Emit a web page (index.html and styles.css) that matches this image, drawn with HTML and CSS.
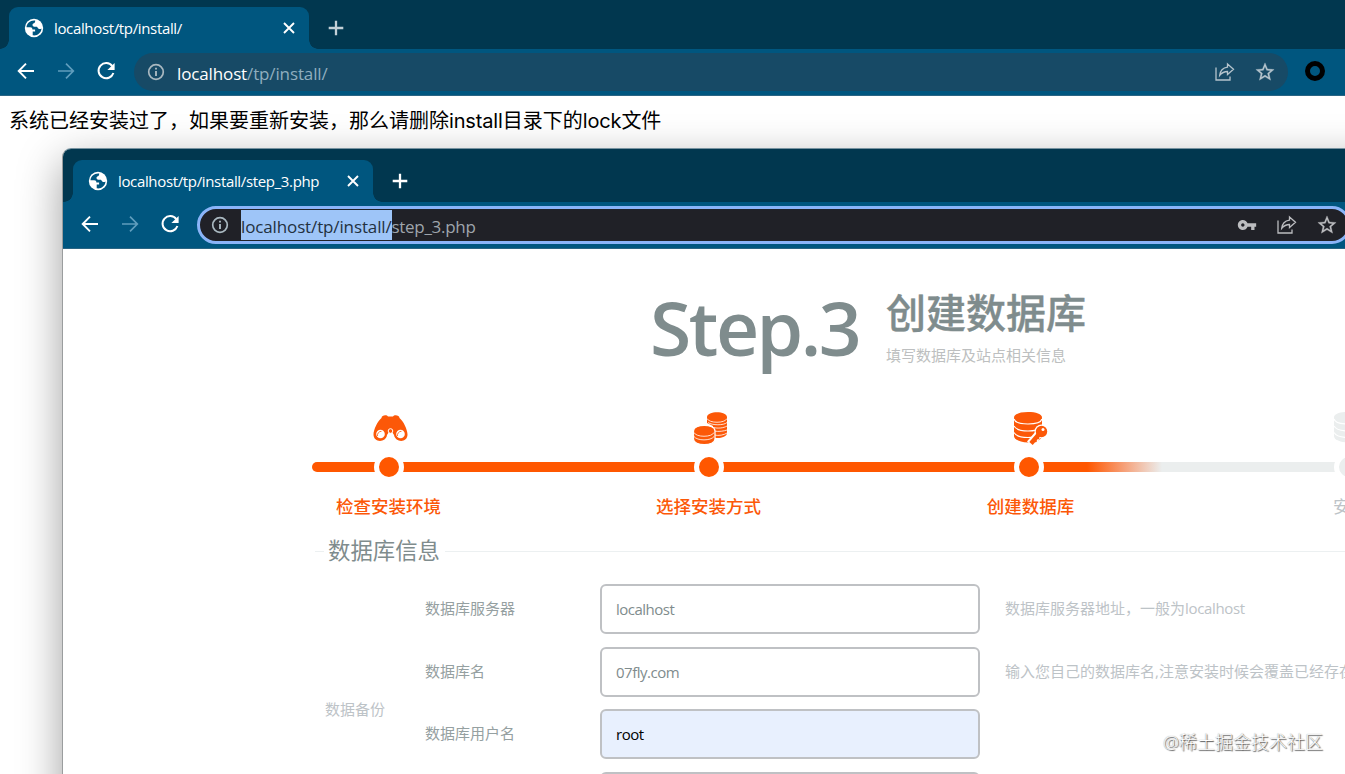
FILE: index.html
```html
<!DOCTYPE html>
<html lang="zh-CN">
<head>
    <meta charset="UTF-8">
    <meta name="viewport" content="width=device-width, initial-scale=1.0">
    <title>localhost/tp/install/</title>
    <link rel="stylesheet" href="styles.css">
</head>
<body>
    <svg class="defs" width="0" height="0">
        <symbol id="globe" viewBox="0 0 20 20">
            <circle cx="10" cy="10" r="9.2" fill="#fff"/>
            <path d="M11.2 2.5C6.500 1.900 2.600 5.300 2.500 9.300H6.200c1.500 0 2.200.9 2.200 2.200h2.700v2.100H8.700v3.700c4.800.8 8.700-2.900 8.800-6.900-.9.600-2 .8-2.900.3-.9-.5-1-1.600-1.800-1.900-1-.4-2.200.2-3.300-.4-1.400-.8-1.300-2.400-.1-3 .9-.5 1.700-.1 1.800-2.900z" fill="#00567f"/>
        </symbol>
        <symbol id="close" viewBox="0 0 12 12">
            <path d="M1 1l10 10M11 1L1 11" stroke="currentColor" stroke-width="1.9" fill="none"/>
        </symbol>
        <symbol id="plus" viewBox="0 0 16 16">
            <path d="M8 .7v14.600M.7 8h14.600" stroke="currentColor" stroke-width="2.300" fill="none"/>
        </symbol>
        <symbol id="back" viewBox="0 0 24 24">
            <path d="M20 12H5.200M12 4.700L4.700 12l7.300 7.300" stroke="currentColor" stroke-width="1.900" fill="none"/>
        </symbol>
        <symbol id="forward" viewBox="0 0 24 24">
            <path d="M4 12h14.800M12 4.700l7.300 7.300-7.300 7.300" stroke="currentColor" stroke-width="1.700" fill="none"/>
        </symbol>
        <symbol id="reload" viewBox="0 0 24 24">
            <path d="M18.300 7.100A7.600 7.600 0 1 0 19.400 14" stroke="currentColor" stroke-width="2" fill="none"/>
            <path d="M20.600 3.900v7.200h-7.200z" fill="currentColor"/>
        </symbol>
        <symbol id="info" viewBox="0 0 20 20">
            <circle cx="10" cy="10" r="7.300" stroke="currentColor" stroke-width="1.700" fill="none"/>
            <path d="M10 9v5M10 5.800v1.800" stroke="currentColor" stroke-width="1.900"/>
        </symbol>
        <symbol id="share" viewBox="0 0 22 20">
            <path d="M2 5.500V18h14v-3.500" stroke="currentColor" stroke-width="1.300" fill="none"/>
            <path d="M13.500 2l6 5.300-6 5.200v-3c-3.500 0-5.500 1-7.800 3.900.4-4.300 3-7.600 7.800-8.300z" stroke="currentColor" stroke-width="1.300" fill="none"/>
        </symbol>
        <symbol id="star" viewBox="0 0 24 24">
            <path fill="currentColor" stroke="currentColor" stroke-width=".3" d="M22 9.240l-7.190-.62L12 2 9.190 8.630 2 9.240l5.460 4.730L5.820 21 12 17.270 18.180 21l-1.630-7.030L22 9.240zM12 15.400l-3.760 2.270 1-4.280-3.320-2.880 4.380-.38L12 6.100l1.710 4.040 4.380.38-3.320 2.880 1 4.280L12 15.400z"/>
        </symbol>
        <symbol id="key" viewBox="0 0 24 24">
            <path fill="currentColor" d="M12.650 10C11.830 7.670 9.610 6 7 6c-3.310 0-6 2.690-6 6s2.690 6 6 6c2.610 0 4.830-1.670 5.650-4H17v4h4v-4h2v-4H12.650zM7 14c-1.100 0-2-.9-2-2s.9-2 2-2 2 .9 2 2-.9 2-2 2z"/>
        </symbol>
        <symbol id="database" viewBox="0 0 35 34">
            <path fill="currentColor" d="M1 6.500C1 3 7 1 15 1s14 2 14 5.500V25c0 3.500-6 6.500-14 6.500S1 28.500 1 25z"/>
            <path d="M1 8c1 3.500 7 5 14 5s13-1.500 14-5M1 15c2 3.500 7 5 14 5 6 0 11-1 14-4M1 21.500c2 3.500 7 5 14 5 4 0 7-.5 9-1.500" fill="none" stroke="#fff" stroke-width="1.100"/>
        </symbol>
    </svg>

    <div class="browser">
        <div class="tab-strip">
            <div class="tab">
                <svg class="globe"><use href="#globe"/></svg>
                <span class="tab-title">localhost/tp/install/</span>
                <svg class="close"><use href="#close"/></svg>
            </div>
            <svg class="plus"><use href="#plus"/></svg>
        </div>
        <div class="toolbar">
            <svg class="nav"><use href="#back"/></svg>
            <svg class="nav dim"><use href="#forward"/></svg>
            <svg class="nav"><use href="#reload"/></svg>
            <div class="omnibox">
                <svg class="info"><use href="#info"/></svg>
                <span class="url"><b>localhost</b>/tp/install/</span>
                <svg class="share"><use href="#share"/></svg>
                <svg class="star"><use href="#star"/></svg>
            </div>
            <div class="avatar"></div>
        </div>
        <p class="message">系统已经安装过了，如果要重新安装，那么请删除<span>install</span>目录下的<span>lock</span>文件</p>
    </div>

    <div class="browser front">
        <div class="tab-strip">
            <div class="tab">
                <svg class="globe"><use href="#globe"/></svg>
                <span class="tab-title">localhost/tp/install/step_3.php</span>
                <svg class="close"><use href="#close"/></svg>
            </div>
            <svg class="plus"><use href="#plus"/></svg>
        </div>
        <div class="toolbar">
            <svg class="nav"><use href="#back"/></svg>
            <svg class="nav dim"><use href="#forward"/></svg>
            <svg class="nav"><use href="#reload"/></svg>
            <div class="omnibox focused">
                <svg class="info"><use href="#info"/></svg>
                <span class="url"><mark>localhost/tp/install/</mark>step_3.php</span>
                <svg class="key"><use href="#key"/></svg>
                <svg class="share"><use href="#share"/></svg>
                <svg class="star"><use href="#star"/></svg>
            </div>
        </div>

        <div class="page">
            <div class="heading">
                <div class="step-no">Step.3</div>
                <div>
                    <h1>创建数据库</h1>
                    <p>填写数据库及站点相关信息</p>
                </div>
            </div>

            <div class="steps">
                <div class="step">
                    <svg class="step-icon" viewBox="0 0 35 34">
                        <path fill="currentColor" d="M8.500 7c0-3 5.500-3.500 6.500-1.500h5c1-2 6.500-1.500 6.500 1.500 4 3 8 12 8 16.500 0 8.500-12 8.500-13.500 0.500l-1.500-2.500h-4L14 24c-1 8-13.500 8-13.500-.5C.5 19 4.500 10 8.500 7z"/>
                        <circle cx="7.500" cy="23" r="4.300" fill="#fff"/>
                        <circle cx="27.500" cy="23" r="4.300" fill="#fff"/>
                        <path d="M4.500 25a4 4 0 0 1 4-4.700M24.500 25a4 4 0 0 1 4-4.700" fill="none" stroke="currentColor" stroke-width=".8"/>
                        <circle cx="17.500" cy="20" r="2.300" fill="currentColor" stroke="#fff"/>
                    </svg>
                    <i class="dot"></i>
                    <span>检查安装环境</span>
                </div>
                <div class="step">
                    <svg class="step-icon" viewBox="0 0 35 34">
                        <path fill="currentColor" d="M14 6c0-6.500 20-6.500 20 0v16c0 5-11 6-14 4V15l-6-3z"/>
                        <path d="M14 7.500c2 5 18 5 20 0M15 11.500c4 3 16 3 19 0M19 16c5 2 12 1 15-1M21 20c5 1 10 0 13-1M21 24c5 1 10 0 13-2" fill="none" stroke="#fff" stroke-width=".8"/>
                        <path fill="currentColor" stroke="#fff" stroke-width="1.200" d="M.5 20c0-7.500 21.500-7.500 21.500 0v8c0 7.500-21.500 7.500-21.500 0z"/>
                        <path d="M1 21.500c2 5 18 5 20 0M1 25.500c3 4.500 17 4.500 20 0" fill="none" stroke="#fff" stroke-width=".8"/>
                    </svg>
                    <i class="dot"></i>
                    <span>选择安装方式</span>
                </div>
                <div class="step current">
                    <svg class="step-icon" viewBox="0 0 35 34">
                        <use href="#database"/>
                        <path d="M26.500 22L17 33" stroke="#fff" stroke-width="8"/>
                        <circle cx="28.500" cy="20.500" r="7" fill="#fff"/>
                        <path d="M27 22l-9 10.500" stroke="currentColor" stroke-width="4.500"/>
                        <path d="M21.500 29l2 1.800M24 26l2 1.800" stroke="currentColor" stroke-width="2"/>
                        <circle cx="28.500" cy="20.500" r="5.700" fill="currentColor"/>
                        <circle cx="30" cy="18.500" r="1.500" fill="#fff"/>
                    </svg>
                    <i class="dot"></i>
                    <span>创建数据库</span>
                </div>
                <div class="step todo">
                    <svg class="step-icon"><use href="#database"/></svg>
                    <i class="dot"></i>
                    <span>安装</span>
                </div>
            </div>

            <div class="section-title">数据库信息</div>
            <div class="form">
                <div class="side">数据备份</div>
                <div class="rows">
                    <div class="row">
                        <label for="host">数据库服务器</label>
                        <input type="text" id="host" value="localhost">
                        <span>数据库服务器地址，一般为<em>localhost</em></span>
                    </div>
                    <div class="row">
                        <label for="name">数据库名</label>
                        <input type="text" id="name" value="07fly.com">
                        <span>输入您自己的数据库名,注意安装时候会覆盖已经存在</span>
                    </div>
                    <div class="row">
                        <label for="user">数据库用户名</label>
                        <input type="text" id="user" class="filled" value="root">
                    </div>
                    <div class="row">
                        <label></label>
                        <input type="text">
                    </div>
                </div>
            </div>
        </div>
    </div>
    <div class="watermark">@稀土掘金技术社区</div>
</body>
</html>
```

FILE: styles.css
```css
* {
    box-sizing: border-box;
}
body {
    margin: 0;
    height: 774px;
    position: relative;
    overflow: hidden;
    background-color: #fff;
    font-family: "Open Sans", "Noto Sans CJK SC", sans-serif;
}
svg {
    flex: none;
    display: block;
}
.defs {
    position: absolute;
}
.tab-strip {
    height: 49px;
    padding: 7px 0 0 9px;
    background-color: #01374f;
    display: flex;
}
.tab {
    position: relative;
    width: 300px;
    padding: 0 14px 0 15px;
    display: flex;
    align-items: center;
    background-color: #00567f;
    border-radius: 9px 9px 0 0;
    color: #fff;
}
/* curved feet of the active tab */
.tab::before, .tab::after {
    content: "";
    position: absolute;
    bottom: 0;
    width: 9px;
    height: 9px;
}
.tab::before {
    left: -9px;
    background: radial-gradient(circle at 0 0, transparent 8.5px, #00567f 9px);
}
.tab::after {
    right: -9px;
    background: radial-gradient(circle at 100% 0, transparent 8.5px, #00567f 9px);
}
.globe {
    width: 20px;
    height: 20px;
    margin-right: 10px;
}
.tab-title {
    flex: 1;
    font-size: 15px;
    line-height: 20px;
    letter-spacing: -0.35px;
    white-space: nowrap;
}
.close {
    width: 12px;
    height: 12px;
}
.plus {
    width: 16px;
    height: 16px;
    margin: 13px 0 0 19px;
    color: #c3d0d7;
}
.toolbar {
    height: 47px;
    padding: 4px 20px 0 14px;
    display: flex;
    background-color: #00567f;
    border-bottom: 1px solid #2a6584;
    color: #fff;
}
.nav {
    width: 24px;
    height: 24px;
    margin: 6px 16px 0 0;
}
.dim {
    color: #5f9dbd;
}
.omnibox {
    width: 1154px;
    height: 38px;
    padding: 0 12px 0 12px;
    display: flex;
    align-items: center;
    background-color: #174a66;
    border-radius: 19px;
    color: #b5c4cd;
}
.info {
    width: 20px;
    height: 20px;
    margin-right: 11px;
    color: #a9b8c0;
}
.url {
    flex: 1;
    font-size: 17px;
    line-height: 30px;
    letter-spacing: -0.13px;
    white-space: nowrap;
    padding-top: 4px;
    color: #8faebf;
}
.url b {
    font-weight: 400;
    color: #fff;
}
.share {
    width: 22px;
    height: 20px;
    margin-right: 18px;
}
.star {
    width: 22px;
    height: 22px;
}
.avatar {
    width: 20px;
    height: 20px;
    margin: 8px 0 0 17px;
    border: 5px solid #000;
    border-radius: 50%;
}
.message {
    margin: 11px 0 0 9px;
    font-family: "Inter", "Noto Sans CJK SC", sans-serif;
    font-size: 20px;
    line-height: 28px;
    color: #000;
}
.message span {
    letter-spacing: -0.15px;
}

/* second window, lying over the first */
.front {
    position: absolute;
    left: 62px;
    top: 148px;
    width: 1400px;
    height: 800px;
    background-color: #fff;
    border: 1px solid #9a9d9e;
    border-top-color: #7893a0;
    border-radius: 9px 0 0 0;
    overflow: hidden;
    box-shadow: 0 14px 44px rgba(0, 0, 0, 0.38);
}
.front .tab-strip {
    height: 53px;
    padding: 11px 0 0 10px;
}
.front .tab-title {
    margin-top: -1px;
}
.front .plus {
    color: #fff;
}
.front .toolbar {
    padding: 4px 0 0 15px;
}
.focused {
    width: 1154px;
    flex: none;
    margin-left: -1px;
    background-color: #202127;
    border: 3px solid #8ab4f8;
    padding: 0 10px;
    color: #bcbdc0;
}
.focused .url {
    color: #9fa5ac;
    padding-top: 1px;
    letter-spacing: -0.3px;
}
.focused mark {
    display: inline-block;
    height: 30px;
    line-height: 34px;
    letter-spacing: -0.13px;
    background-color: #9ec5f8;
    color: #23313f;
}
.key {
    width: 20px;
    height: 20px;
    margin-right: 19px;
}

.page {
    padding-left: 249px;
}
.heading {
    height: 158px;
    padding: 35px 0 0 338px;
    display: flex;
    color: #7f8c8d;
}
.step-no {
    width: 236px;
    font-size: 75px;
    font-weight: 600;
    line-height: 86px;
    letter-spacing: -2.5px;
}
.heading h1 {
    margin: 0;
    font-size: 40px;
    font-weight: 500;
    line-height: 58px;
    -webkit-text-stroke: 0.4px #7f8c8d;
}
.heading p {
    margin: 1px 0 0;
    font-size: 15px;
    line-height: 24px;
    color: #bdbfc0;
}
.steps {
    position: relative;
    width: 1280px;
    margin-left: -83px;
    height: 125px;
    padding-top: 4px;
    display: grid;
    grid-template-columns: repeat(4, 320px);
}
.steps::before {
    content: "";
    position: absolute;
    left: 83px;
    right: 0;
    top: 55px;
    height: 10px;
    border-radius: 5px;
    background: linear-gradient(to right, #ff5700 775px, #f6a078 812px, #ebeeee 850px);
}
.step {
    position: relative;
    display: flex;
    flex-direction: column;
    align-items: center;
    font-size: 17.5px;
    font-weight: 500;
    line-height: 26px;
    color: #fc5808;
}
.step-icon {
    width: 35px;
    height: 34px;
    margin-left: 3px;
}
.dot {
    width: 30px;
    height: 30px;
    margin: 7px 0 11px;
    border: 5px solid #fff;
    border-radius: 50%;
    background-color: #ff5700;
}
.step span {
    margin-right: 1px;
}
.current span, .todo span {
    margin-left: 4px;
}
.todo {
    color: #bdc3c7;
    font-weight: 400;
}
.todo .step-icon {
    color: #ebeeee;
}
.todo .dot {
    background-color: #ebeeee;
}
.section-title {
    display: flex;
    align-items: center;
    margin-left: 3px;
    height: 38px;
    font-size: 22.4px;
    line-height: 34px;
    color: #7f8c8d;
}
.section-title::before {
    content: "";
    width: 9px;
    height: 1px;
    margin-right: 4px;
    background-color: #ecf0f1;
}
.section-title::after {
    content: "";
    flex: 1;
    height: 1px;
    margin-left: 5px;
    background-color: #ecf0f1;
}
.form {
    display: flex;
    padding: 14px 0 0 13px;
    font-size: 15px;
}
.side {
    width: 100px;
    padding-top: 113px;
    line-height: 24px;
    color: #bdc3c7;
}
.row {
    height: 62.5px;
    display: flex;
}
.row label {
    width: 175px;
    line-height: 48px;
    color: #95a0a1;
}
.row input {
    width: 380px;
    height: 50px;
    padding: 0 14px;
    border: 2px solid #bfc1c4;
    border-radius: 6px;
    background-color: #fff;
    color: #7f8c8d;
    font-family: inherit;
    font-size: 15px;
    letter-spacing: -0.5px;
}
.row .filled {
    background-color: #e8f0fe;
    color: #000;
}
.row span {
    margin-left: 25px;
    line-height: 48px;
    white-space: nowrap;
    color: #bdc3c7;
}
.row em {
    font-style: normal;
    letter-spacing: -0.35px;
}
.watermark {
    position: absolute;
    right: 22px;
    bottom: 19px;
    font-size: 18px;
    font-weight: 300;
    line-height: 26px;
    color: #fff;
    text-shadow: 1px 1px 1px #555, 0 0 1px #888;
}
```
